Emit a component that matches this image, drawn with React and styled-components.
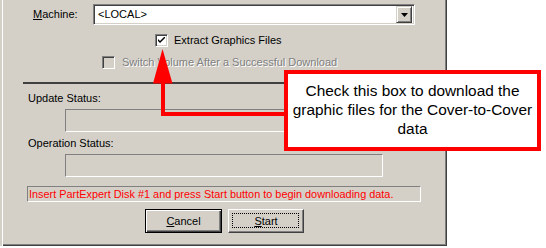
import React from "react";
import styled, { createGlobalStyle } from "styled-components";

const Global = createGlobalStyle`
  html, body { margin: 0; padding: 0; background: #ffffff; }
  body { font-family: "Liberation Sans", Arial, sans-serif; }
`;

const Page = styled.div`
  position: relative;
  width: 546px;
  height: 248px;
  overflow: hidden;
  background: #ffffff;
`;

const Dialog = styled.div`
  box-sizing: border-box;
  width: 447px;
  height: 246px;
  background: #d4d0c8;
  box-shadow: inset 2px 0 0 #d4d0c8, inset 3px 0 0 #ffffff,
    inset -1px -1px 0 #404040, inset -2px -2px 0 #808080;
  display: flex;
  flex-direction: column;
  padding-top: 4px;
  font-size: 11px;
  line-height: 13px;
  color: #000;
`;

const Row = styled.div`
  display: flex;
  align-items: center;
  margin-top: ${(p) => p.$top || 0}px;
  padding-left: ${(p) => p.$left || 0}px;
  height: ${(p) => p.$h || 13}px;
`;

const Label = styled.span`
  width: ${(p) => p.$w || "auto"};
  flex: none;
`;

const Combo = styled.div`
  box-sizing: border-box;
  width: 322px;
  height: 21px;
  background: #fff;
  border: 1px solid;
  border-color: #808080 #ffffff #ffffff #808080;
  box-shadow: inset 1px 1px 0 #404040, inset -1px -1px 0 #d4d0c8;
  display: flex;
  align-items: center;
  padding: 2px 2px 2px 4px;
`;

const ComboText = styled.span`
  flex: 1;
`;

const DropButton = styled.div`
  box-sizing: border-box;
  width: 16px;
  height: 17px;
  background: #d4d0c8;
  border: 1px solid;
  border-color: #d4d0c8 #404040 #404040 #d4d0c8;
  box-shadow: inset 1px 1px 0 #fff, inset -1px -1px 0 #808080;
  display: flex;
  align-items: center;
  justify-content: center;
`;

const Box = styled.div`
  box-sizing: border-box;
  width: 13px;
  height: 13px;
  flex: none;
  background: ${(p) => (p.$disabled ? "#d4d0c8" : "#fff")};
  border: 1px solid;
  border-color: #808080 #ffffff #ffffff #808080;
  box-shadow: inset 1px 1px 0 #404040, inset -1px -1px 0 #d4d0c8;
  display: flex;
  align-items: center;
  justify-content: center;
`;

const CheckText = styled.span`
  margin-left: ${(p) => p.$gap}px;
  color: ${(p) => (p.$disabled ? "#808080" : "#000")};
  text-shadow: ${(p) => (p.$disabled ? "1px 1px 0 #ffffff" : "none")};
  white-space: nowrap;
`;

const Separator = styled.div`
  height: 2px;
  background: #404040;
  margin: 13px 6px 0 23px;
`;

const FieldLabel = styled.div`
  margin-top: ${(p) => p.$top}px;
  padding-left: 28px;
  height: 13px;
`;

const StatusBox = styled.div`
  box-sizing: border-box;
  margin-top: 4px;
  margin-left: 65px;
  width: 318px;
  height: 23px;
  border: 1px solid;
  border-color: #808080 #ffffff #ffffff #808080;
`;

const Message = styled.div`
  box-sizing: border-box;
  margin-top: 9px;
  margin-left: 27px;
  width: 394px;
  height: 16px;
  border: 1px solid;
  border-color: #808080 #ffffff #ffffff #808080;
  color: #ff0000;
  font-size: 10.9px;
  line-height: 14px;
  padding-left: 1px;
  white-space: nowrap;
  overflow: hidden;
`;

const Buttons = styled.div`
  display: flex;
  gap: 6px;
  margin-top: 7px;
  padding-left: 145px;
`;

const Button = styled.div`
  position: relative;
  box-sizing: border-box;
  width: ${(p) => p.$w}px;
  height: 24px;
  display: flex;
  align-items: center;
  justify-content: center;
  background: #d4d0c8;
  font-size: 11px;
  border: 1px solid;
  border-color: ${(p) =>
    p.$default ? "#000 #000 #000 #000" : "#fff #404040 #404040 #fff"};
  box-shadow: ${(p) =>
    p.$default
      ? "inset 1px 1px 0 #fff, inset -1px -1px 0 #404040, inset -2px -2px 0 #808080"
      : "inset -1px -1px 0 #808080"};
  ${(p) =>
    p.$focus &&
    `&::after {
      content: "";
      position: absolute;
      left: 3px; top: 3px; right: 4px; bottom: 4px;
      border: 1px dotted #000;
    }`}
`;

const Callout = styled.div`
  position: absolute;
  left: 284px;
  top: 70px;
  width: 257px;
  height: 81px;
  box-sizing: border-box;
  border: 4px solid #ff0000;
  background: #fff;
  padding-top: 7px;
  text-align: center;
  font-family: "Liberation Sans", Arial, sans-serif;
  font-size: 15.4px;
  line-height: 19px;
  color: #000;
`;

const ArrowSvg = styled.svg`
  position: absolute;
  left: 0;
  top: 0;
  pointer-events: none;
`;

export default function App() {
  return (
    <Page>
      <Global />
      <Dialog>
        <Row $left={33} $h={21}>
          <Label $w="60px">
            <u>M</u>achine:
          </Label>
          <Combo>
            <ComboText>&lt;LOCAL&gt;</ComboText>
            <DropButton>
              <svg width="7" height="4" viewBox="0 0 7 4">
                <polygon points="0,0 7,0 3.5,4" fill="#000" />
              </svg>
            </DropButton>
          </Combo>
        </Row>
        <Row $left={155} $top={9}>
          <Box>
            <svg width="7" height="7" viewBox="0 0 7 7">
              <path d="M0 2 L0 4 L2 6 L7 1 L7 -1 L2 4 Z" fill="#000" />
            </svg>
          </Box>
          <CheckText $gap={6}>Extract Graphics Files</CheckText>
        </Row>
        <Row $left={102} $top={9}>
          <Box $disabled />
          <CheckText $gap={7} $disabled>
            Switch Volume After a Successful Download
          </CheckText>
        </Row>
        <Separator />
        <FieldLabel $top={8}>Update Status:</FieldLabel>
        <StatusBox />
        <FieldLabel $top={5}>Operation Status:</FieldLabel>
        <StatusBox />
        <Message>
          Insert PartExpert Disk #1 and press Start button to begin downloading
          data.
        </Message>
        <Buttons>
          <Button $w={77} $default>
            <span>
              <u>C</u>ancel
            </span>
          </Button>
          <Button $w={76} $focus>
            <span>
              <u>S</u>tart
            </span>
          </Button>
        </Buttons>
      </Dialog>
      <ArrowSvg width="546" height="248" viewBox="0 0 546 248">
        <polygon points="162.5,49 153,83.5 172.5,83.5" fill="#ff0000" />
        <polyline
          points="163,83 163,114 286,114"
          fill="none"
          stroke="#ff0000"
          strokeWidth="4"
        />
      </ArrowSvg>
      <Callout>
        Check this box to download the
        <br />
        graphic files for the Cover-to-Cover
        <br />
        data
      </Callout>
    </Page>
  );
}
